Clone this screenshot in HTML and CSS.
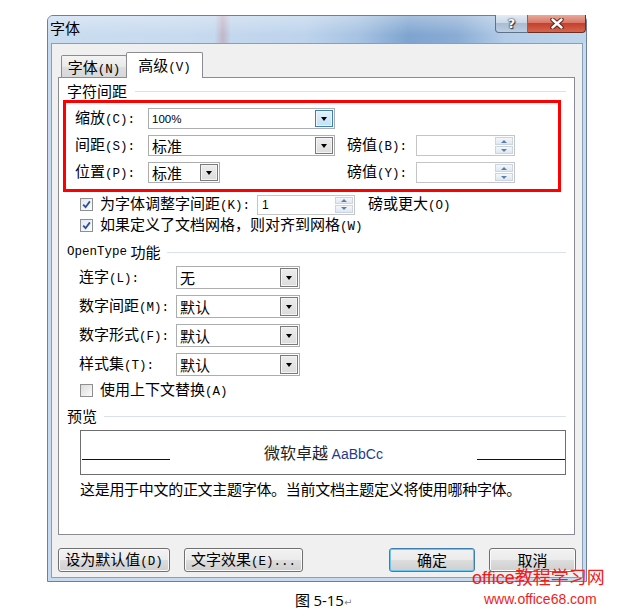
FILE: index.html
```html
<!DOCTYPE html>
<html lang="zh-CN">
<head>
  <meta charset="UTF-8">
  <title>字体</title>
  <link rel="stylesheet" href="styles.css">
</head>
<body>
  <div class="page">
    <div class="dialog">
      <div class="titlebar">
        <span class="title">字体</span>
        <div class="caption-btns">
          <span class="btn-help">?</span>
          <span class="btn-close">
            <svg width="14" height="11" viewBox="0 0 14 11">
              <path d="M2.5 1.5 L11.5 9.5 M11.5 1.5 L2.5 9.5" stroke="#5b2219" stroke-width="4.4" stroke-linecap="round" fill="none"/>
              <path d="M2.5 1.5 L11.5 9.5 M11.5 1.5 L2.5 9.5" stroke="#fff" stroke-width="2.4" stroke-linecap="round" fill="none"/>
            </svg>
          </span>
        </div>
      </div>

      <div class="client">
        <div class="tabs">
          <div class="tab">字体<span class="key">(N)</span></div>
          <div class="tab active">高级<span class="key">(V)</span></div>
        </div>

        <div class="panel">
          <div class="group-title">字符间距</div>

          <!-- highlighted rows -->
          <div class="mark">
            <div class="row">
              <span class="lbl">缩放<span class="key">(C):</span></span>
              <div class="combo wide hot"><span class="val num-val">100%</span><span class="arrow"></span></div>
            </div>
            <div class="row">
              <span class="lbl">间距<span class="key">(S):</span></span>
              <div class="combo wide"><span class="val">标准</span><span class="arrow"></span></div>
              <span class="lbl2">磅值<span class="key">(B):</span></span>
              <div class="spin"><span class="num"></span><span class="btns"><span class="up"></span><span class="down"></span></span></div>
            </div>
            <div class="row">
              <span class="lbl">位置<span class="key">(P):</span></span>
              <div class="combo small"><span class="val">标准</span><span class="arrow"></span></div>
              <span class="lbl2">磅值<span class="key">(Y):</span></span>
              <div class="spin"><span class="num"></span><span class="btns"><span class="up"></span><span class="down"></span></span></div>
            </div>
          </div>

          <div class="check-row first">
            <span class="cb checked"><svg width="9" height="9" viewBox="0 0 9 9"><path d="M1.2 4.6 L3.6 7.2 L7.9 1.4" stroke="#2d4f97" stroke-width="1.8" fill="none"/></svg></span>
            <span class="kern-lbl">为字体调整字间距<span class="key">(K):</span></span>
            <div class="spin kern"><span class="num">1</span><span class="btns"><span class="up"></span><span class="down"></span></span></div>
            <span class="after-spin">磅或更大<span class="key">(O)</span></span>
          </div>
          <div class="check-row">
            <span class="cb checked"><svg width="9" height="9" viewBox="0 0 9 9"><path d="M1.2 4.6 L3.6 7.2 L7.9 1.4" stroke="#2d4f97" stroke-width="1.8" fill="none"/></svg></span>
            <span>如果定义了文档网格，则对齐到网格<span class="key">(W)</span></span>
          </div>

          <div class="group-title ot"><span class="key">OpenType</span>&nbsp;功能</div>
          <div class="ot-grid">
            <span>连字<span class="key">(L):</span></span>
            <div class="combo"><span class="val">无</span><span class="arrow"></span></div>
            <span>数字间距<span class="key">(M):</span></span>
            <div class="combo"><span class="val">默认</span><span class="arrow"></span></div>
            <span>数字形式<span class="key">(F):</span></span>
            <div class="combo"><span class="val">默认</span><span class="arrow"></span></div>
            <span>样式集<span class="key">(T):</span></span>
            <div class="combo"><span class="val">默认</span><span class="arrow"></span></div>
          </div>
          <div class="check-row alt">
            <span class="cb"></span>
            <span>使用上下文替换<span class="key">(A)</span></span>
          </div>

          <div class="group-title preview-title">预览</div>
          <div class="preview">
            <span class="rule"></span>
            <span class="sample">微软卓越 <span class="latin">AaBbCc</span></span>
            <span class="rule"></span>
          </div>
          <div class="desc">这是用于中文的正文主题字体。当前文档主题定义将使用哪种字体。</div>
        </div>

        <div class="buttons">
          <button class="b-default">设为默认值<span class="key">(D)</span></button>
          <button class="b-effects">文字效果<span class="key">(E)...</span></button>
          <button class="b-ok">确定</button>
          <button class="b-cancel">取消</button>
        </div>
      </div>
    </div>

    <div class="caption">图 <span class="fig-no">5-15</span><span class="ret">↵</span></div>

    <div class="watermark">
      <div class="wm-name">office教程学习网</div>
      <div class="wm-url">www.office68.com</div>
    </div>
  </div>
</body>
</html>
```

FILE: styles.css
```css
* {
  margin: 0;
  padding: 0;
  box-sizing: border-box;
}
body {
  background: #fff;
  color: #000;
  font-family: "Noto Sans CJK SC", sans-serif;
  font-size: 15px;
  line-height: 16px;
}
.page {
  position: relative;
  width: 627px;
  height: 615px;
  overflow: hidden;
}
.key {
  font-family: "Liberation Mono", monospace;
  font-size: 12.5px;
}

/* window frame */
.dialog {
  margin: 15px 0 0 47px;
  width: 540px;
  height: 567px;
  border: 1px solid #6a819d;
  border-radius: 6px 6px 0 0;
  background: #c7daef;
  display: flex;
  flex-direction: column;
}
.titlebar {
  height: 27px;
  display: flex;
  align-items: flex-start;
  border-radius: 5px 5px 0 0;
  background:
    linear-gradient(rgba(255,255,255,0.3), rgba(255,255,255,0) 70%),
    linear-gradient(to right, transparent 31%, rgba(190,120,130,0.35) 32.5%, transparent 34%),
    linear-gradient(to right, #cadcf0 0%, #c7daef 25%, #bdd3ec 48%, #a6c2e2 58%, #7ea4cf 67%, #8aacd4 76%, #b3cce8 85%, #bfd5ec 100%);
}
.title {
  padding: 4px 0 0 2px;
}
.caption-btns {
  margin-left: auto;
  margin-top: -1px;
  display: flex;
  height: 18px;
}
.btn-help {
  width: 33px;
  border: 1px solid #5d7188;
  border-top: 0;
  border-radius: 0 0 0 4px;
  background: linear-gradient(#e4ecf5, #cbd8e6 45%, #a9bdd3 50%, #bccddf);
  color: #fff;
  font: bold 13px "DejaVu Sans", sans-serif;
  line-height: 17px;
  text-align: center;
  text-shadow: 0 0 1px #1d2a3a, 0 0 2px #1d2a3a, 1px 1px 1px #2a3848;
}
.btn-close {
  width: 58px;
  border: 1px solid #6b2e25;
  border-top: 0;
  border-left: 0;
  border-radius: 0 0 4px 0;
  background: linear-gradient(#eaa898, #d9786a 45%, #c5412b 50%, #d5654f);
  display: flex;
  align-items: center;
  justify-content: center;
}

/* client area */
.client {
  flex: 1;
  margin: 0 3px 3px;
  border: 1px solid #8b9eb6;
  background: #f0f0f0;
  padding: 8px 7px 0 6px;
}
.tabs {
  display: flex;
  align-items: flex-end;
  height: 25px;
  padding-left: 3px;
}
.tab {
  width: 66px;
  height: 22px;
  border: 1px solid #898c95;
  border-bottom: 0;
  border-radius: 2px 2px 0 0;
  background: linear-gradient(#f4f4f4, #e9e9e9 50%, #dedede 50%, #d8d8d8);
  text-align: center;
  line-height: 21px;
}
.tab.active {
  width: 77px;
  height: 26px;
  margin-left: -1px;
  margin-bottom: -1px;
  background: #fff;
  position: relative;
  z-index: 1;
  line-height: 24px;
}
.panel {
  height: 458px;
  border: 1px solid #898c95;
  background: #fff;
}
.group-title {
  display: flex;
  align-items: center;
  height: 16px;
  margin: 5px 8px 0 8px;
  white-space: nowrap;
}
.group-title::after {
  content: "";
  flex: 1;
  border-top: 1px solid #d9e2ea;
  margin-left: 8px;
}
.group-title.ot {
  margin-top: 8px;
}
.group-title.ot::after,
.group-title.preview-title::after {
  margin-left: 7px;
}
.group-title.preview-title {
  margin-top: 8px;
}

/* red annotation box */
.mark {
  width: 498px;
  margin: 1px 0 0 4px;
  border: 3px solid #f00;
  padding: 5px 0 6px 9px;
  display: flex;
  flex-direction: column;
  gap: 6px;
}
.row {
  display: flex;
  align-items: center;
  height: 21px;
}
.lbl {
  width: 73px;
}
.lbl2 {
  width: 69px;
  margin-left: 12px;
}

/* combo boxes */
.combo {
  display: flex;
  align-items: center;
  height: 21px;
  border: 1px solid #abadb3;
  background: #fff;
  padding-left: 3px;
}
.combo.wide {
  width: 187px;
}
.combo.small {
  width: 72px;
  margin-right: 115px;
}
.combo .val {
  flex: 1;
}
.combo .num-val {
  font: 11.5px "Liberation Sans", sans-serif;
}
.combo .arrow {
  width: 18px;
  height: calc(100% - 2px);
  margin-right: 1px;
  border: 1px solid #7a7a7a;
  box-shadow: inset 0 0 0 1px #f4f4f4;
  background: linear-gradient(#ededed, #dcdcdc);
  display: flex;
  align-items: center;
  justify-content: center;
}
.combo .arrow::after {
  content: "";
  border-left: 3.5px solid transparent;
  border-right: 3.5px solid transparent;
  border-top: 4px solid #000;
}
.combo.hot .arrow {
  border-color: #3c7fb1;
  background: linear-gradient(#e3f2fc, #c0e0f7);
}

/* spin boxes */
.spin {
  display: flex;
  width: 99px;
  height: 21px;
  border: 1px solid #c2c6cb;
  background: #fff;
}
.spin .num {
  flex: 1;
  padding-left: 4px;
  font: 12px "Liberation Sans", sans-serif;
  line-height: 19px;
}
.spin .btns {
  width: 18px;
  margin: 1px;
  display: flex;
  flex-direction: column;
  gap: 1px;
}
.spin .btns span {
  flex: 1;
  border: 1px solid #ccd5df;
  background: linear-gradient(#f4f7fa, #dfe7f0);
  display: flex;
  align-items: center;
  justify-content: center;
}
.spin .up::after {
  content: "";
  border-left: 3px solid transparent;
  border-right: 3px solid transparent;
  border-bottom: 3px solid #5c7eaf;
}
.spin .down::after {
  content: "";
  border-left: 3px solid transparent;
  border-right: 3px solid transparent;
  border-top: 3px solid #5c7eaf;
}
.spin.kern {
  width: 98px;
  height: 20px;
}

/* checkbox rows */
.check-row {
  display: flex;
  align-items: center;
  height: 21px;
  padding-left: 21px;
  white-space: nowrap;
}
.check-row.first {
  margin-top: 2px;
}
.check-row.alt {
  height: 20px;
  margin-top: 4px;
}
.cb {
  width: 13px;
  height: 13px;
  margin-right: 7px;
  border: 1px solid #8e8f8f;
  background: linear-gradient(135deg, #dcdcdc, #fbfbfb);
  display: flex;
  align-items: center;
  justify-content: center;
}
.cb.checked {
  background: linear-gradient(135deg, #e2e8f2, #fdfdfd);
}
.kern-lbl {
  width: 157px;
}
.after-spin {
  margin-left: 13px;
}

/* OpenType grid */
.ot-grid {
  display: grid;
  grid-template-columns: 97px 124px;
  grid-auto-rows: 23px;
  row-gap: 6px;
  align-items: center;
  margin-top: 6px;
  padding-left: 20px;
}
.ot-grid .combo {
  height: 23px;
}

/* preview */
.preview {
  width: 486px;
  height: 45px;
  margin: 6px 0 0 21px;
  border: 1px solid #6e6e6e;
  display: flex;
  align-items: center;
  padding-left: 1px;
}
.preview .rule {
  width: 88px;
  align-self: flex-end;
  margin-bottom: 14px;
  border-top: 1px solid #111;
}
.preview .sample {
  flex: 1;
  text-align: center;
  font-size: 16px;
  color: #222;
}
.preview .latin {
  font: 14px "Liberation Sans", sans-serif;
  color: #1d3b8e;
}
.desc {
  margin-top: 6px;
  padding-left: 21px;
  letter-spacing: -0.3px;
}

/* dialog buttons */
.buttons {
  display: flex;
  margin-top: 13px;
  height: 24px;
}
.buttons button {
  height: 24px;
  border: 1px solid #707070;
  border-radius: 3px;
  background: linear-gradient(#f2f2f2, #ebebeb 50%, #dddddd 50%, #cfcfcf);
  box-shadow: inset 0 0 0 1px #fafafa;
  font-family: "Noto Sans CJK SC", sans-serif;
  font-size: 15px;
  line-height: 16px;
  color: #000;
}
.b-default {
  width: 112px;
}
.b-effects {
  width: 119px;
  margin-left: 14px;
}
.b-ok {
  width: 86px;
  margin-left: auto;
  border-color: #3c7fb1 !important;
  box-shadow: inset 0 0 0 1px #6cc6f0 !important;
}
.b-cancel {
  width: 87px;
  margin-left: 14px;
  margin-right: -1px;
}

/* figure caption + watermark */
.caption {
  margin-top: 8px;
  padding-left: 295px;
  line-height: 20px;
}
.fig-no {
  font: 15px "Open Sans", sans-serif;
}
.ret {
  font: 10px "DejaVu Sans", sans-serif;
  color: #888;
}
.watermark {
  position: absolute;
  left: 472px;
  top: 567px;
  color: #f01c1c;
}
.wm-name {
  font: 18px "Liberation Sans", "Noto Sans CJK SC", sans-serif;
  line-height: 22px;
}
.wm-url {
  margin: 0 0 0 12px;
  font: 14px "Liberation Sans", sans-serif;
  line-height: 20px;
}
```
